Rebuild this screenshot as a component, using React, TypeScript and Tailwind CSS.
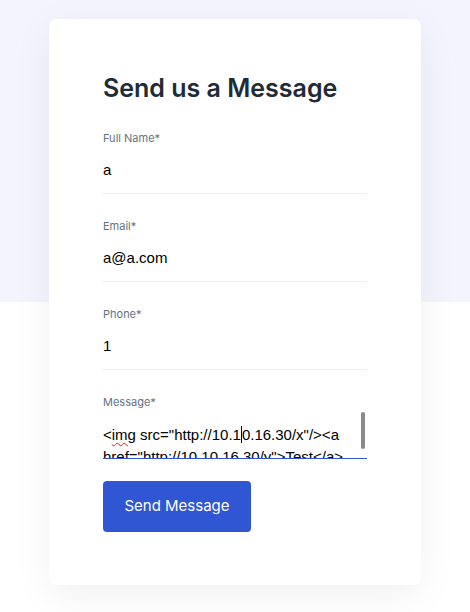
import React from 'react';

const fields = [
  { label: 'Full Name*', value: 'a' },
  { label: 'Email*', value: 'a@a.com' },
  { label: 'Phone*', value: '1' },
];

const App: React.FC = () => {
  return (
    <div className="min-h-[612px] bg-[linear-gradient(to_bottom,#f3f4fe_302px,#ffffff_302px)] pt-[19px] font-['Inter',sans-serif]">
      <div className="mx-auto w-[372px] rounded-lg bg-white px-[54px] pt-[53px] pb-[53px] shadow-[0_10px_40px_rgba(0,0,0,0.06)]">
        <h2 className="mb-[26px] text-[25px] leading-8 font-semibold text-[#212b36]">Send us a Message</h2>

        {fields.map((f) => (
          <div key={f.label} className="mb-6">
            <label className="block text-[11px] leading-4 text-[#637381]">{f.label}</label>
            <div className="flex h-12 items-center border-b border-[#eceef2] pt-[2px] font-['Liberation_Sans',Arial,sans-serif] text-[15px] text-black">
              {f.value}
            </div>
          </div>
        ))}

        <div className="mb-[22px]">
          <label className="block text-[11px] leading-4 text-[#637381]">Message*</label>
          <div className="relative h-[49px] overflow-hidden border-b border-[#3056d3] pt-[13px] font-['Liberation_Sans',Arial,sans-serif] text-[15px] leading-[22px] text-black">
            <div className="pr-4">
              &lt;<span className="underline decoration-wavy decoration-[#e02020] decoration-1 underline-offset-2">img</span> src="http://10.1<span className="inline-block h-[17px] w-px translate-y-[3px] bg-black"></span>0.16.30/x"/&gt;&lt;a href="http://10.10.16.30/y"&gt;Test&lt;/a&gt;
            </div>
            <div className="absolute top-[2px] right-[2px] h-[37px] w-[4px] rounded-sm bg-[#8a8a8a]"></div>
          </div>
        </div>

        <button className="h-[51px] w-[148px] rounded bg-[#3056d3] text-[15px] font-normal text-white">
          Send Message
        </button>
      </div>
    </div>
  );
};

export default App;
